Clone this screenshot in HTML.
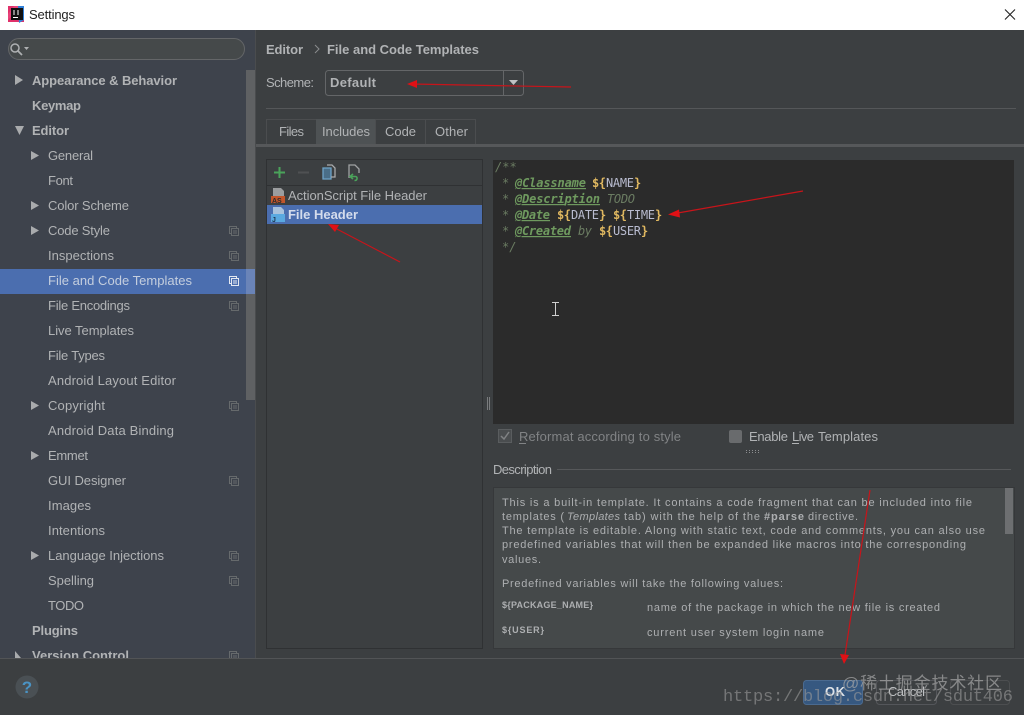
<!DOCTYPE html>
<html><head><meta charset="utf-8"><title>Settings</title>
<style>
html,body{margin:0;padding:0;background:#3c3f41;width:1024px;height:715px;overflow:hidden}
svg{display:block;filter:blur(.3px)}
text{font-family:"Liberation Sans",sans-serif;font-size:13px;fill:#b1b3b5;white-space:pre}
.b{font-weight:bold}
.m{font-family:"DejaVu Sans Mono","Liberation Mono",monospace;font-size:12px}
.c{fill:#6b7c62;font-style:italic}
.t{fill:#6f9a5f;font-style:italic;font-weight:bold;text-decoration:underline}
.y{fill:#e0b860;font-weight:bold}
.v{fill:#b9bcd0}
.d{font-size:11px;fill:#adafb1}
</style></head><body>
<svg width="1024" height="715" viewBox="0 0 1024 715" xmlns="http://www.w3.org/2000/svg">
<defs>
<g id="cp" fill="none" stroke="#666a6c" stroke-width="1"><rect x="0.5" y="0.5" width="7" height="7"/><rect x="2.5" y="2.5" width="7" height="7" fill="#3e434c"/><path d="M4 5h4M4 7h4"/></g>
</defs>
<rect width="1024" height="715" fill="#3c3f41"/>
<!-- title bar -->
<rect width="1024" height="30" fill="#fff"/>
<rect x="8" y="6" width="16" height="16" fill="#e0316a"/>
<path d="M8 14L14 6h6L8 20z" fill="#e8437a"/><path d="M18 6h6v14l-5 3z" fill="#2f7fd8"/>
<rect x="11" y="8" width="12" height="12" fill="#111"/>
<rect x="13" y="17" width="5" height="1" fill="#fff"/><path d="M14 10v5M18 10v5" stroke="#fff"/>
<text x="29" y="19" style="fill:#222" textLength="46" lengthAdjust="spacing">Settings</text>
<path d="M1005 9.500l10 10M1015 9.500l-10 10" stroke="#222" stroke-width="1.100" fill="none"/>

<!-- sidebar -->
<rect x="0" y="30" width="255" height="628" fill="#3e434c"/>
<rect x="255" y="30" width="1" height="628" fill="#4a4c4e"/>
<rect x="8.500" y="38.500" width="236" height="21" rx="10.500" fill="#45494a" stroke="#646668"/>
<circle cx="15" cy="48" r="4" fill="none" stroke="#aeb0b2" stroke-width="1.500"/>
<path d="M18 51l4 4" stroke="#aeb0b2" stroke-width="1.800"/><path d="M24 47h5l-2.500 3z" fill="#aeb0b2"/>
<rect x="246" y="70" width="9" height="330" fill="#5f6163"/>
<rect x="0" y="269" width="255" height="25" fill="#4b6eaf"/>
<rect x="246" y="269" width="9" height="25" fill="#6a84b8"/>

<g fill="#a9abad">
<path d="M15 75v10l8-5z"/><path d="M15 126h9l-4.500 9z"/><path d="M31 151v9l8-4.500z"/><path d="M31 201v9l8-4.500z"/><path d="M31 226v9l8-4.500z"/><path d="M31 401v9l8-4.500z"/><path d="M31 451v9l8-4.500z"/><path d="M31 551v9l8-4.500z"/>
<path d="M15 651v7h6z"/>
</g>

<text x="32" y="85" class="b" textLength="145" lengthAdjust="spacing">Appearance &amp; Behavior</text>
<text x="32" y="110" class="b" textLength="49" lengthAdjust="spacing">Keymap</text>
<text x="32" y="135" class="b" textLength="37" lengthAdjust="spacing">Editor</text>
<text x="48" y="160" textLength="45" lengthAdjust="spacing">General</text>
<text x="48" y="185" textLength="25" lengthAdjust="spacing">Font</text>
<text x="48" y="210" textLength="81" lengthAdjust="spacing">Color Scheme</text>
<text x="48" y="235" textLength="62" lengthAdjust="spacing">Code Style</text>
<text x="48" y="260" textLength="66" lengthAdjust="spacing">Inspections</text>
<text x="48" y="285" textLength="144" lengthAdjust="spacing" style="fill:#c4cede">File and Code Templates</text>
<text x="48" y="310" textLength="82" lengthAdjust="spacing">File Encodings</text>
<text x="48" y="335" textLength="86" lengthAdjust="spacing">Live Templates</text>
<text x="48" y="360" textLength="57" lengthAdjust="spacing">File Types</text>
<text x="48" y="385" textLength="128" lengthAdjust="spacing">Android Layout Editor</text>
<text x="48" y="410" textLength="57" lengthAdjust="spacing">Copyright</text>
<text x="48" y="435" textLength="126" lengthAdjust="spacing">Android Data Binding</text>
<text x="48" y="460" textLength="40" lengthAdjust="spacing">Emmet</text>
<text x="48" y="485" textLength="78" lengthAdjust="spacing">GUI Designer</text>
<text x="48" y="510" textLength="43" lengthAdjust="spacing">Images</text>
<text x="48" y="535" textLength="57" lengthAdjust="spacing">Intentions</text>
<text x="48" y="560" textLength="116" lengthAdjust="spacing">Language Injections</text>
<text x="48" y="585" textLength="46" lengthAdjust="spacing">Spelling</text>
<text x="48" y="610" textLength="36" lengthAdjust="spacing">TODO</text>
<text x="32" y="635" class="b" textLength="46" lengthAdjust="spacing">Plugins</text>
<text x="32" y="660" class="b" textLength="97" lengthAdjust="spacing">Version Control</text>

<use href="#cp" x="229" y="226"/><use href="#cp" x="229" y="251"/><use href="#cp" x="229" y="301"/><use href="#cp" x="229" y="401"/><use href="#cp" x="229" y="476"/><use href="#cp" x="229" y="551"/><use href="#cp" x="229" y="576"/><use href="#cp" x="229" y="651"/>
<g fill="none" stroke="#e4e8f0"><rect x="229.500" y="276.500" width="7" height="7"/><rect x="231.500" y="278.500" width="7" height="7" fill="#4b6eaf"/><path d="M233 281h4M233 283h4"/></g>

<!-- header -->
<text x="266" y="54" class="b" textLength="37" lengthAdjust="spacing">Editor</text>
<path d="M315 45l4 4-4 4" fill="none" stroke="#8a8c8e"/>
<text x="327" y="54" class="b" textLength="152" lengthAdjust="spacing">File and Code Templates</text>
<text x="266" y="87" textLength="48" lengthAdjust="spacing">Scheme:</text>
<rect x="325.500" y="70.500" width="198" height="25" rx="3" fill="#3c3f41" stroke="#646668"/>
<path d="M503.500 71v24" stroke="#646668"/>
<path d="M509 80h9l-4.500 5z" fill="#c0c2c4"/>
<text x="330" y="87" class="b" textLength="46" lengthAdjust="spacing">Default</text>
<rect x="266" y="108" width="750" height="1" fill="#555759"/>

<!-- tabs -->
<rect x="266.500" y="119.500" width="209" height="25" fill="#3c3f41" stroke="#4b4d4f"/>
<rect x="316" y="119" width="59" height="25" fill="#4e5254"/>
<path d="M425.500 119v25M375.500 119v25" stroke="#4b4d4f"/>
<text x="279" y="136" textLength="25" lengthAdjust="spacing">Files</text>
<text x="322" y="136" textLength="48" lengthAdjust="spacing">Includes</text>
<text x="385" y="136" textLength="31" lengthAdjust="spacing">Code</text>
<text x="435" y="136" textLength="33" lengthAdjust="spacing">Other</text>
<rect x="256" y="144" width="768" height="3" fill="#56585a"/>

<!-- list -->
<rect x="266.500" y="159.500" width="216" height="489" fill="#3c3f41" stroke="#2f3133"/>
<rect x="267" y="185" width="215" height="1" fill="#2f3133"/>
<path d="M274 172.500h11M279.500 167v11" stroke="#4aa35a" stroke-width="2"/>
<path d="M298 172.500h11" stroke="#4f5153" stroke-width="2"/>
<g fill="none" stroke-width="1.300"><path d="M323 168h8v11h-8z" fill="#4a6e88" stroke="#6ea3c8"/><path d="M327 165h5l3 3v9h-4" stroke="#a8aaac"/></g>
<path d="M349 178v-13h6l4 4v4" fill="none" stroke="#a0a2a4" stroke-width="1.300"/>
<path d="M353 174l-3 2.500 3 2.500M350.500 176.500h5c2 0 2.500 4 -1 4" fill="none" stroke="#4aa35a" stroke-width="1.600"/>

<rect x="267" y="205" width="215" height="19" fill="#4b6eaf"/>
<path d="M273 188h8l3 3v5h-11z" fill="#9b9d9f"/><rect x="271" y="196" width="14" height="7" fill="#c2562c"/>
<text x="272" y="203" style="font-size:7px;fill:#2b2b2b;font-weight:bold">AS</text>
<path d="M273 207h8l3 3v4h-11z" fill="#a9c2dc"/><rect x="271" y="214" width="14" height="8" fill="#5aa9e0"/>
<text x="272" y="222" style="font-size:7px;fill:#1d3550;font-weight:bold">J</text>
<text x="288" y="200" textLength="139" lengthAdjust="spacing">ActionScript File Header</text>
<text x="288" y="219" class="b" textLength="70" lengthAdjust="spacing" style="fill:#d4dcec">File Header</text>

<!-- editor -->
<rect x="493" y="160" width="521" height="264" fill="#2b2b2b"/>
<g fill="#7a7c7e"><rect x="487" y="397" width="1" height="13"/><rect x="489" y="397" width="1" height="13"/></g>
<text x="495" y="171" class="m c">/**</text>
<text x="502" y="187" class="m c">*</text><text x="515" y="187" class="m t" textLength="71" lengthAdjust="spacing">@Classname</text><text x="592" y="187" class="m y" textLength="14">${</text><text x="606" y="187" class="m v" textLength="28" lengthAdjust="spacing">NAME</text><text x="634" y="187" class="m y">}</text>
<text x="502" y="203" class="m c">*</text><text x="515" y="203" class="m t" textLength="85" lengthAdjust="spacing">@Description</text><text x="607" y="203" class="m c" textLength="28" lengthAdjust="spacing">TODO</text>
<text x="502" y="219" class="m c">*</text><text x="515" y="219" class="m t" textLength="35" lengthAdjust="spacing">@Date</text><text x="557" y="219" class="m y" textLength="14">${</text><text x="571" y="219" class="m v" textLength="28" lengthAdjust="spacing">DATE</text><text x="599" y="219" class="m y">}</text><text x="613" y="219" class="m y" textLength="14">${</text><text x="627" y="219" class="m v" textLength="28" lengthAdjust="spacing">TIME</text><text x="655" y="219" class="m y">}</text>
<text x="502" y="235" class="m c">*</text><text x="515" y="235" class="m t" textLength="56" lengthAdjust="spacing">@Created</text><text x="578" y="235" class="m c" textLength="14" lengthAdjust="spacing">by</text><text x="599" y="235" class="m y" textLength="14">${</text><text x="613" y="235" class="m v" textLength="28" lengthAdjust="spacing">USER</text><text x="641" y="235" class="m y">}</text>
<text x="502" y="251" class="m c">*/</text>
<path d="M552 302.500h3.500v13H552M559 302.500h-3.500v13h3.500" fill="none" stroke="#d0d0d0"/>

<!-- checkboxes -->
<rect x="498.500" y="429.500" width="13" height="13" fill="#4a4d4f" stroke="#5a5d5f"/>
<path d="M501 436l3 3 5-7" fill="none" stroke="#808284" stroke-width="1.500"/>
<text x="519" y="441" textLength="162" lengthAdjust="spacing" style="fill:#818385">Reformat according to style</text>
<rect x="519" y="443" width="7" height="1" fill="#818385"/>
<rect x="729" y="430" width="13" height="13" rx="2" fill="#696b6d"/>
<text x="749" y="441" textLength="39" lengthAdjust="spacing">Enable</text>
<text x="792" y="441" textLength="22" lengthAdjust="spacing">Live</text>
<text x="818" y="441" textLength="60" lengthAdjust="spacing">Templates</text>
<rect x="792" y="443" width="7" height="1" fill="#b1b3b5"/>
<path d="M746 450.500h14" stroke="#8c8e90" stroke-dasharray="1 2"/>
<path d="M746 452.500h14" stroke="#8c8e90" stroke-dasharray="1 2"/>

<!-- description -->
<text x="493" y="474" textLength="59" lengthAdjust="spacing">Description</text>
<rect x="557" y="469" width="454" height="1" fill="#56585a"/>
<rect x="493.500" y="487.500" width="521" height="161" fill="#45494a" stroke="#36383a"/>
<rect x="1005" y="488" width="8" height="46" fill="#6d6f71"/>
<text x="502" y="506" class="d" textLength="470" lengthAdjust="spacing">This is a built-in template. It contains a code fragment that can be included into file</text>
<text x="502" y="520" class="d" textLength="62" lengthAdjust="spacing">templates (</text>
<text x="567" y="520" class="d" font-style="italic" textLength="53" lengthAdjust="spacing">Templates</text>
<text x="624" y="520" class="d" textLength="136" lengthAdjust="spacing">tab) with the help of the</text>
<text x="764" y="520" class="d b" textLength="40" lengthAdjust="spacing">#parse</text>
<text x="808" y="520" class="d" textLength="50" lengthAdjust="spacing">directive.</text>
<text x="502" y="534" class="d" textLength="483" lengthAdjust="spacing">The template is editable. Along with static text, code and comments, you can also use</text>
<text x="502" y="548" class="d" textLength="464" lengthAdjust="spacing">predefined variables that will then be expanded like macros into the corresponding</text>
<text x="502" y="563" class="d" textLength="39" lengthAdjust="spacing">values.</text>
<text x="502" y="587" class="d" textLength="281" lengthAdjust="spacing">Predefined variables will take the following values:</text>
<text x="502" y="608" class="d b" style="font-size:9px" textLength="91" lengthAdjust="spacing">${PACKAGE_NAME}</text>
<text x="647" y="611" class="d" textLength="293" lengthAdjust="spacing">name of the package in which the new file is created</text>
<text x="502" y="633" class="d b" style="font-size:9px" textLength="42" lengthAdjust="spacing">${USER}</text>
<text x="647" y="636" class="d" textLength="177" lengthAdjust="spacing">current user system login name</text>

<!-- bottom -->
<rect x="0" y="658" width="1024" height="57" fill="#3c3f41"/>
<rect x="0" y="658" width="1024" height="1" fill="#525456"/>
<circle cx="27" cy="687" r="11.500" fill="#4a5054"/>
<text x="27" y="693" text-anchor="middle" class="b" style="font-size:17px;fill:#4a93c4">?</text>
<rect x="803.500" y="680.500" width="59" height="24" rx="3" fill="#365880" stroke="#4a6a90"/>
<rect x="876.500" y="680.500" width="60" height="24" rx="3" fill="#3c3f41" stroke="#54565a"/>
<rect x="950.500" y="680.500" width="59" height="24" rx="3" fill="#3c3f41" stroke="#4c4e50"/>
<text x="825" y="696" class="b" style="fill:#dfe3e8" textLength="20" lengthAdjust="spacing">OK</text>
<text x="888" y="696" style="fill:#bfc1c3" textLength="37" lengthAdjust="spacing">Cancel</text>

<!-- red arrows -->
<g fill="none" stroke="#c8141a" stroke-width="1.200">
<path d="M571 87L412 84"/><path d="M803 191L672 214"/><path d="M400 262L333 227"/><path d="M870 490L845 655"/>
</g>
<g fill="#e01015">
<path d="M407 84l10-4v8z"/><path d="M668 214.500l11-5 1 8z"/><path d="M328 224l11 1-4 7z"/><path d="M844 664l-4-10 9 1z"/>
</g>

<!-- watermark -->
<text x="842" y="689" style='font-family:"Liberation Sans","Noto Sans CJK SC",sans-serif;font-size:17px;fill:#a8a8a8;opacity:.7' textLength="160" lengthAdjust="spacing">@稀土掘金技术社区</text>
<text x="723" y="701" style='font-family:"Liberation Mono",monospace;font-size:17px;fill:#9a9a9a;opacity:.6' textLength="290" lengthAdjust="spacing">https://blog.csdn.net/sdut406</text>
</svg>
</body></html>
